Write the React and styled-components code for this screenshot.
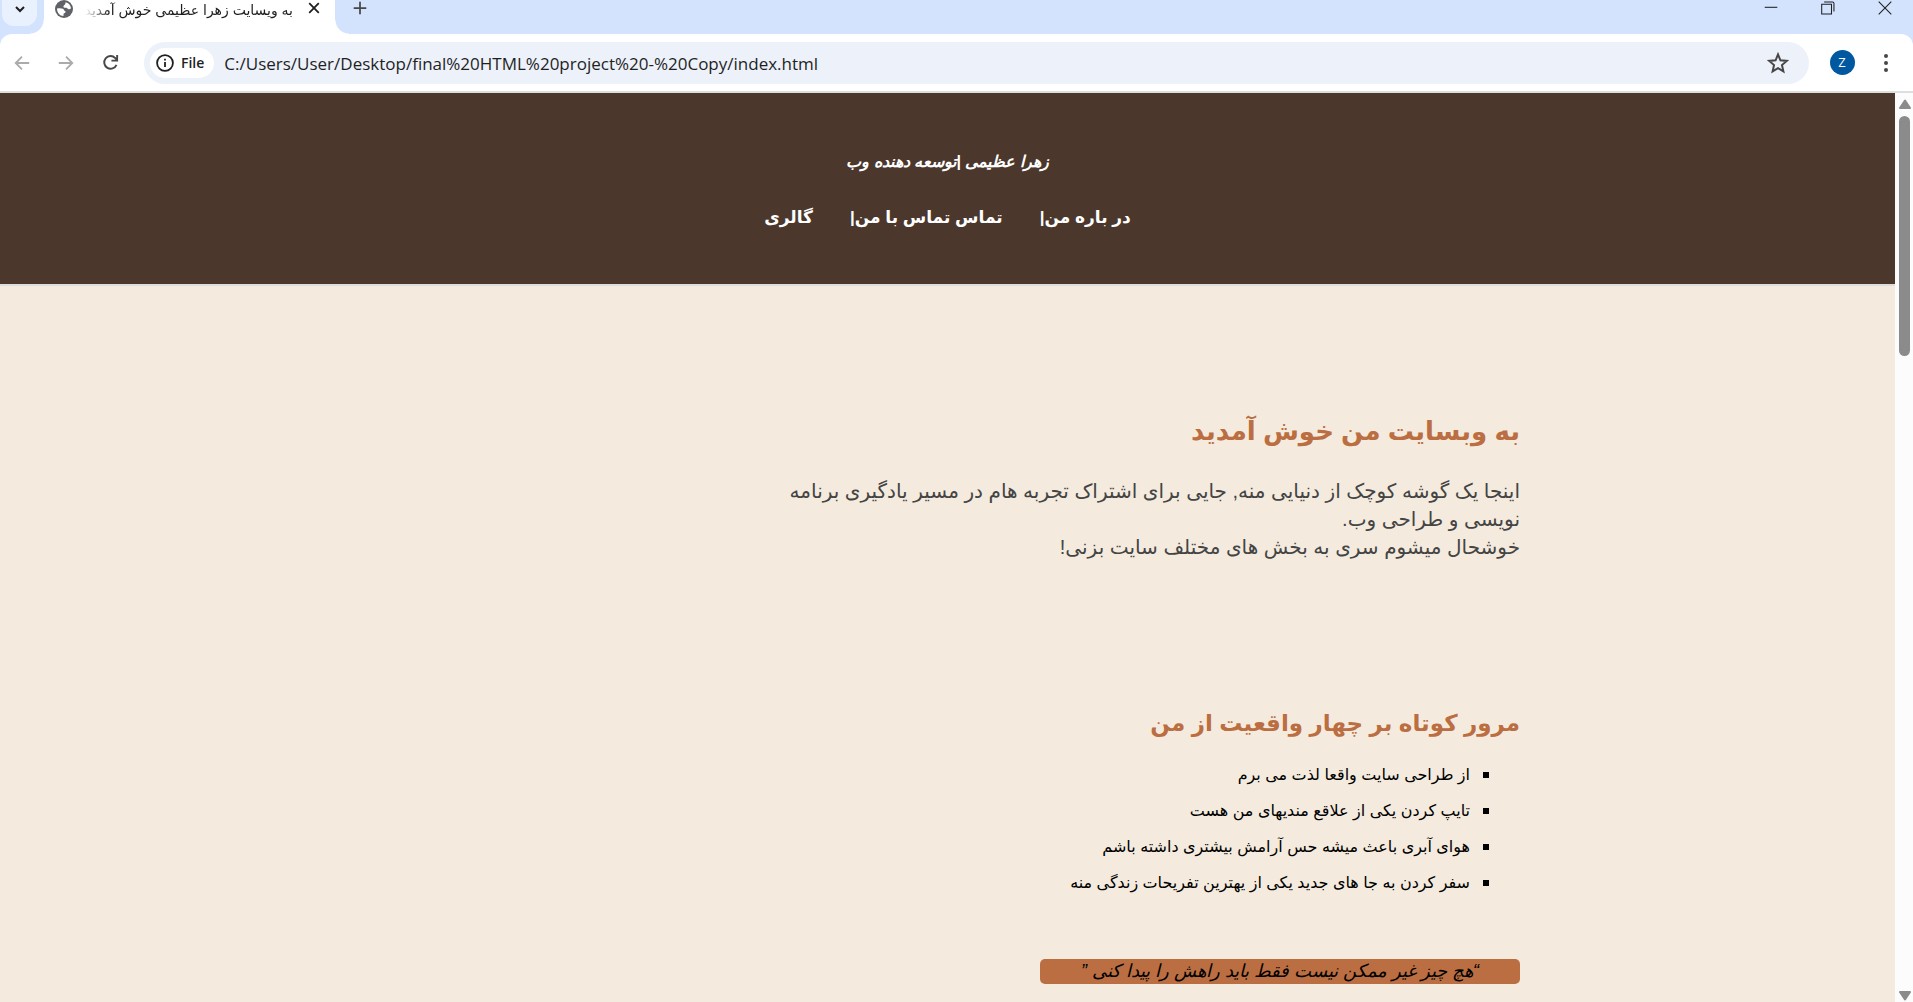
import React from "react";
import styled, { createGlobalStyle } from "styled-components";

const GlobalStyle = createGlobalStyle`
  * { box-sizing: border-box; }
  body { margin: 0; background: #f4ebde; }
  button { border: 0; padding: 0; background: none; color: inherit; font: inherit; cursor: pointer; }
`;

const ui = `"Open Sans", "DejaVu Sans", sans-serif`;
const persian = `"Liberation Sans", "DejaVu Sans", sans-serif`;

const Window = styled.div`
  display: flex;
  flex-direction: column;
  height: 100vh;
  overflow: hidden;
  font-family: ${ui};
  color: #1f1f1f;
`;

const TabStrip = styled.div`
  display: flex;
  flex: none;
  height: 34px;
  background: #d3e3fd;
`;

const TabSearch = styled.button`
  display: flex;
  justify-content: center;
  align-items: center;
  width: 35px;
  height: 26px;
  margin: 0 7px 0 2px;
  padding-bottom: 8px;
  border-radius: 0 0 12px 12px;
  background: #e9f1fe;
`;

const Tab = styled.div`
  position: relative;
  display: flex;
  align-items: flex-start;
  width: 291px;
  padding: 0 15px 0 11px;
  background: #fff;

  &::before,
  &::after {
    content: "";
    position: absolute;
    bottom: 0;
    width: 14px;
    height: 14px;
  }
  &::before {
    right: 100%;
    background: radial-gradient(circle at 0 0, transparent 13px, #fff 14px);
  }
  &::after {
    left: 100%;
    background: radial-gradient(circle at 100% 0, transparent 13px, #fff 14px);
  }
`;

const TabTitle = styled.span`
  flex: 1;
  min-width: 0;
  margin: 0 15px 0 12px;
  overflow: hidden;
  white-space: nowrap;
  font: 14px/20px ${persian};
  -webkit-mask-image: linear-gradient(to right, transparent, #000 24px);
  mask-image: linear-gradient(to right, transparent, #000 24px);
`;

const StripButton = styled.button`
  display: flex;
  justify-content: center;
  align-items: center;
  width: ${(p) => p.$width}px;
  height: 16px;
`;

const NewTab = styled(StripButton)`
  margin-left: 12px;
`;

const WindowControls = styled.div`
  display: flex;
  margin-left: auto;
`;

const ToolbarShell = styled.div`
  flex: none;
  background: #d3e3fd;
`;

const Toolbar = styled.div`
  display: flex;
  align-items: center;
  height: 59px;
  padding: 0 5px 0 0;
  border-bottom: 2px solid #dddfdd;
  border-radius: 12px 12px 0 0;
  background: #fff;
`;

const ToolButton = styled.button`
  display: flex;
  flex: none;
  justify-content: center;
  align-items: center;
  width: 44px;
  height: 40px;
  color: ${(p) => (p.disabled ? "#ababab" : "#474747")};
`;

const Omnibox = styled.form`
  display: flex;
  flex: 1;
  align-items: center;
  height: 42px;
  margin: 0 11px 0 12px;
  padding: 0 9px 0 6px;
  border-radius: 21px;
  background: #ecf1fa;
`;

const FileChip = styled(ToolButton)`
  gap: 7px;
  width: auto;
  height: 30px;
  padding: 0 10px 0 6px;
  border-radius: 15px;
  background: #fff;
  color: #1f1f1f;
  font: 600 14px/30px ${ui};
`;

const Url = styled.input`
  flex: 1;
  min-width: 0;
  height: 26px;
  margin-left: 10px;
  padding: 2px 0 0;
  border: 0;
  outline: 0;
  background: none;
  color: #1f1f1f;
  font: 17px/24px ${ui};
`;

const Avatar = styled.span`
  width: 25px;
  height: 25px;
  border-radius: 50%;
  background: #0058a0;
  color: #fff;
  font: 13px/25px ${ui};
  text-align: center;
`;

const Viewport = styled.div`
  display: flex;
  flex: 1;
  min-height: 0;
`;

const Page = styled.div`
  flex: 1;
  min-width: 0;
  overflow: hidden;
  background: #f4ebde;
  color: #000;
  font-family: ${persian};
`;

const Header = styled.header`
  padding: 56px 24px 51px;
  border-bottom: 2px solid #dddddd;
  background: #4b372b;
  color: #fff;
  text-align: center;
`;

const SiteTitle = styled.h1`
  margin: 0 0 28px;
  font: italic bold 16px/26px ${persian};
`;

const Nav = styled.nav`
  display: flex;
  justify-content: center;
  gap: 37px;
  font: bold 17px/30px ${persian};

  a { color: #fff; text-decoration: none; }
`;

const Main = styled.main`
  max-width: 1145px;
  margin: 0 auto;
`;

const Section = styled.section`
  padding-top: ${(p) => p.$top}px;
`;

const Heading = styled.h2`
  margin: 0;
  color: #bb6e42;
  font: bold ${(p) => p.$size}px/40px ${persian};
`;

const Intro = styled.p`
  max-width: 760px;
  margin: 26px 0 0;
  color: #444;
  font-size: 20px;
  line-height: 28px;
`;

const Facts = styled.ul`
  margin: 14px 0 0;
  padding: 0;
  list-style: none;
`;

const Fact = styled.li`
  display: flex;
  align-items: center;
  gap: 13px;
  padding-right: 31px;
  font-size: 16px;
  line-height: 36px;

  &::before {
    content: "";
    width: 6px;
    height: 6px;
    background: #000;
  }
`;

const Quote = styled.blockquote`
  width: 480px;
  margin: 58px 0 0;
  border-radius: 5px;
  background: #bb6e42;
  font-size: 18px;
  font-style: italic;
  line-height: 25px;
  text-align: center;
`;

const Scrollbar = styled.div`
  display: flex;
  flex: none;
  flex-direction: column;
  align-items: center;
  width: 18px;
  padding: 6px 0 1px 1px;
  background: #fcfcfc;
`;

const Thumb = styled.div`
  width: 11px;
  height: 240px;
  margin: 7px 0 auto;
  border-radius: 6px;
  background: #8b8b8b;
`;

const Stroke = ({ size = 20, width = 2, d, color = "currentColor" }) => (
  <svg width={size} height={size} viewBox="0 0 20 20" fill="none" stroke={color} strokeWidth={width} aria-hidden="true">
    <path d={d} />
  </svg>
);

const Globe = () => (
  <svg width="18" height="18" viewBox="0 0 18 18" aria-hidden="true">
    <circle cx="9" cy="9" r="9" fill="#5f6368" />
    <path d="M2 8.500c2-.4 4.500-.3 6 .3 1 .5.600 1.700 1.600 2 .9.300 1.300.9.700 1.800-.6.800-1.700.6-1.800 1.700v1.700C4.800 16 2 12.800 2 8.500zM10.500 2.200c3 .6 5.200 3 5.500 6-.6.800-1.500 1.300-2.500 1-1-.3-1.200-1.200-2.200-1.400-1.100-.2-2.300.1-2.800-.9-.4-1 .5-1.700 1.200-2.200.8-.5.700-1.400.8-2.500z" fill="#fff" />
  </svg>
);

const facts = [
  "از طراحی سایت واقعا لذت می برم",
  "تایپ کردن یکی از علاقع مندیهای من هست",
  "هوای آبری باعث میشه حس آرامش بیشتری داشته باشم",
  "سفر کردن به جا های جدید یکی از یهترین تفریحات زندگی منه",
];

export default function App() {
  return (
    <Window>
      <GlobalStyle />
      <TabStrip>
        <TabSearch aria-label="Search tabs">
          <Stroke size={16} width={2.5} d="M5 7.500l5 5 5-5" />
        </TabSearch>
        <Tab>
          <Globe />
          <TabTitle dir="rtl">به ویسایت زهرا عظیمی خوش آمدید</TabTitle>
          <StripButton $width={12} aria-label="Close tab">
            <Stroke size={12} width={3} d="M2 2l16 16M18 2L2 18" />
          </StripButton>
        </Tab>
        <NewTab $width={26} aria-label="New tab">
          <Stroke size={14} width={2.500} color="#474747" d="M10 1v18M1 10h18" />
        </NewTab>
        <WindowControls>
          <StripButton $width={57} aria-label="Minimize">
            <Stroke size={14} width={1.500} d="M1 9h18" />
          </StripButton>
          <StripButton $width={57} aria-label="Restore">
            <Stroke size={14} width={1.500} d="M1 4.500h14v14H1zM4.500 1.500h12q2 0 2 2V15" />
          </StripButton>
          <StripButton $width={57} aria-label="Close">
            <Stroke size={14} width={1.500} d="M1 1l18 18M19 1L1 19" />
          </StripButton>
        </WindowControls>
      </TabStrip>
      <ToolbarShell>
        <Toolbar>
          <ToolButton disabled aria-label="Back">
            <Stroke size={18} d="M18 10H3.500M10 3l-7 7 7 7" />
          </ToolButton>
          <ToolButton disabled aria-label="Forward">
            <Stroke size={18} d="M2 10h14.500M10 3l7 7-7 7" />
          </ToolButton>
          <ToolButton aria-label="Reload">
            <Stroke size={19} d="M16.300 12.500A6.700 6.700 0 1 1 15 5.300L17 7.500M17 2v6h-6" />
          </ToolButton>
          <Omnibox onSubmit={(e) => e.preventDefault()}>
            <FileChip type="button">
              <Stroke size={18} d="M10 1.200a8.800 8.800 0 1 0 0 17.600a8.800 8.800 0 1 0 0-17.600M10 9v5.500M10 5.300v2" />
              File
            </FileChip>
            <Url aria-label="Address" defaultValue="C:/Users/User/Desktop/final%20HTML%20project%20-%20Copy/index.html" />
            <ToolButton type="button" aria-label="Bookmark">
              <Stroke size={22} width={1.800} d="M10 2.200l2.200 5.400 5.800.5-4.400 3.800 1.300 5.700-4.900-3-4.900 3 1.300-5.700L2 8.100l5.800-.5z" />
            </ToolButton>
          </Omnibox>
          <ToolButton aria-label="Profile">
            <Avatar>Z</Avatar>
          </ToolButton>
          <ToolButton aria-label="Menu">
            <svg width="4" height="18" viewBox="0 0 4 18" fill="currentColor" aria-hidden="true">
              <circle cx="2" cy="2" r="2" />
              <circle cx="2" cy="9" r="2" />
              <circle cx="2" cy="16" r="2" />
            </svg>
          </ToolButton>
        </Toolbar>
      </ToolbarShell>
      <Viewport>
        <Page dir="rtl" lang="fa">
          <Header>
            <SiteTitle>زهرا عظیمی |توسعه دهنده وب</SiteTitle>
            <Nav>
              <a href="#about">در باره من|</a>
              <a href="#contact">تماس تماس با من|</a>
              <a href="#gallery">گالری</a>
            </Nav>
          </Header>
          <Main>
            <Section $top={125}>
              <Heading $size={26}>به وبسایت من خوش آمدید</Heading>
              <Intro>
                اینجا یک گوشه کوچک از دنیایی منه, جایی برای اشتراک تجربه هام در مسیر یادگیری برنامه
                <br />
                نویسی و طراحی وب.
                <br />
                خوشحال میشوم سری به بخش های مختلف سایت بزنی!
              </Intro>
            </Section>
            <Section $top={142}>
              <Heading $size={23}>مرور کوتاه بر چهار واقعیت از من</Heading>
              <Facts>
                {facts.map((fact) => (
                  <Fact key={fact}>{fact}</Fact>
                ))}
              </Facts>
              <Quote>“هچ چیز غیر ممکن نیست فقط باید راهش را پیدا کنی ”</Quote>
            </Section>
          </Main>
        </Page>
        <Scrollbar>
          <svg width="12" height="10" viewBox="0 0 12 10" aria-hidden="true">
            <path d="M6 1.500L11 9H1z" fill="#8b8b8b" stroke="#8b8b8b" strokeWidth="2" strokeLinejoin="round" />
          </svg>
          <Thumb />
          <svg width="12" height="10" viewBox="0 0 12 10" aria-hidden="true">
            <path d="M6 8.500L11 1H1z" fill="#8b8b8b" stroke="#8b8b8b" strokeWidth="2" strokeLinejoin="round" />
          </svg>
        </Scrollbar>
      </Viewport>
    </Window>
  );
}
